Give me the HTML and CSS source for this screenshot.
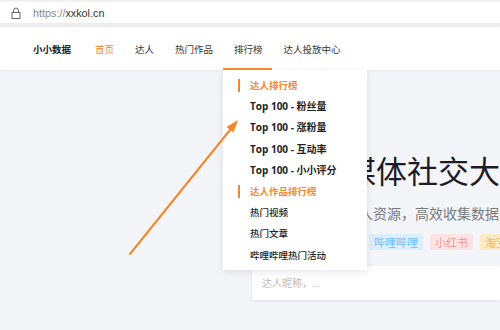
FILE: index.html
```html
<!DOCTYPE html>
<html lang="zh-CN">
<head>
    <meta charset="UTF-8">
    <meta name="viewport" content="width=device-width, initial-scale=1.0">
    <title>小小数据</title>
    <link rel="stylesheet" href="styles.css">
</head>
<body>
    <div class="urlbar">
        <svg class="lock" width="10" height="12" viewBox="0 0 10 12">
            <path d="M2.5 5.5V3.5a2.5 2.5 0 0 1 5 0v2" fill="none" stroke="#666" stroke-width="1"/>
            <rect x="1" y="5.5" width="8" height="6" fill="none" stroke="#666" stroke-width="1"/>
        </svg>
        <span class="scheme">https://</span><span class="host">xxkol.cn</span>
    </div>

    <header class="nav">
        <span class="logo">小小数据</span>
        <a class="nav-item active">首页</a>
        <a class="nav-item">达人</a>
        <a class="nav-item">热门作品</a>
        <a class="nav-item">排行榜</a>
        <a class="nav-item">达人投放中心</a>
    </header>

    <main class="hero">
        <h1 class="hero-title">全网自媒体社交大数据平台</h1>
        <p class="hero-sub">汇聚全网优质达人资源，高效收集数据</p>
        <div class="tags">
            <span class="tag">微信</span>
            <span class="tag">微博</span>
            <span class="tag">抖音</span>
            <span class="tag blue">哔哩哔哩</span>
            <span class="tag red">小红书</span>
            <span class="tag yellow">淘宝直播</span>
        </div>
        <div class="search">达人昵称，...</div>
    </main>

    <div class="dropdown">
        <div class="dd-item dd-title">达人排行榜</div>
        <div class="dd-item bold">Top 100 - 粉丝量</div>
        <div class="dd-item bold">Top 100 - 涨粉量</div>
        <div class="dd-item bold">Top 100 - 互动率</div>
        <div class="dd-item bold">Top 100 - 小小评分</div>
        <div class="dd-item dd-title">达人作品排行榜</div>
        <div class="dd-item">热门视频</div>
        <div class="dd-item">热门文章</div>
        <div class="dd-item">哔哩哔哩热门活动</div>
    </div>

    <svg class="arrow" width="500" height="330" viewBox="0 0 500 330">
        <line x1="130" y1="254" x2="234" y2="125" stroke="#f5862a" stroke-width="2" stroke-linecap="round"/>
        <path d="M238 120 L226.5 127 L233.5 132.5 Z" fill="#f5862a"/>
    </svg>
</body>
</html>
```

FILE: styles.css
```css
body {
    margin: 0;
    padding: 0;
    width: 500px;
    height: 330px;
    overflow: hidden;
    background-color: #f4f5f9;
    font-family: "Noto Sans CJK SC", "Noto Sans", sans-serif;
    color: #333;
    position: relative;
}
.urlbar {
    height: 21px;
    border-top: 2px solid #f1f1f1;
    border-bottom: 4px solid #ececec;
    background-color: #fff;
    display: flex;
    align-items: center;
    padding-left: 11px;
    font-family: "Liberation Sans", Arial, sans-serif;
    font-size: 10.8px;
}
.lock {
    margin-right: 12px;
}
.scheme {
    color: #888;
}
.host {
    color: #333;
}
.nav {
    height: 43px;
    background-color: #fff;
    box-shadow: 0 1px 2px rgba(0, 0, 0, 0.06);
    display: flex;
    align-items: center;
    padding-left: 33px;
    font-size: 9.5px;
}
.logo {
    font-weight: bold;
    color: #222;
    margin-right: 24px;
}
.nav-item {
    color: #333;
    margin-right: 21px;
}
.nav-item.active {
    color: #f5862a;
}
.hero {
    padding: 80px 0 0 252px;
    white-space: nowrap;
}
.hero-title {
    margin: 0;
    font-size: 31px;
    font-weight: normal;
    line-height: 40px;
    color: #1c1c28;
}
.hero-sub {
    margin: 12px 0 0 9px;
    font-size: 14px;
    font-weight: normal;
    line-height: 22px;
    color: #7a7a7a;
}
.tags {
    margin-top: 10px;
    display: flex;
    gap: 7px;
}
.tag {
    height: 16px;
    line-height: 16px;
    padding: 0 5px;
    font-size: 11px;
    font-weight: 300;
    border-radius: 2px;
    background-color: #e6e8ee;
    color: #666;
}
.tag.blue {
    background-color: #dcefff;
    color: #4aa5ee;
}
.tag.red {
    background-color: #fde3e3;
    color: #e77575;
}
.tag.yellow {
    background-color: #fdebc8;
    color: #e9a13c;
}
.search {
    margin-top: 16px;
    height: 34px;
    line-height: 34px;
    padding-left: 10px;
    background-color: #fff;
    box-shadow: 0 1px 3px rgba(0, 0, 0, 0.08);
    font-size: 10px;
    color: #bbb;
}
.dropdown {
    position: absolute;
    left: 223px;
    top: 70px;
    width: 117px;
    padding: 5px 0 4px 27px;
    background-color: #fff;
    box-shadow: 0 2px 8px rgba(0, 0, 0, 0.1);
    font-size: 9.5px;
}
.dropdown::before {
    content: "";
    position: absolute;
    left: 0;
    top: -2px;
    width: 49px;
    height: 2px;
    background-color: #f5862a;
}
.dd-item {
    height: 21.2px;
    line-height: 21px;
    color: #222;
    font-weight: 500;
    white-space: nowrap;
}
.dd-item.bold {
    font-weight: bold;
    font-size: 10px;
    font-family: "Open Sans", "Noto Sans CJK SC", sans-serif;
}
.dd-title {
    position: relative;
    color: #f5862a;
    font-weight: bold;
}
.dd-title::before {
    content: "";
    position: absolute;
    left: -12px;
    top: 4px;
    width: 2px;
    height: 13px;
    background-color: #f5862a;
}
.arrow {
    position: absolute;
    left: 0;
    top: 0;
    pointer-events: none;
}
```
